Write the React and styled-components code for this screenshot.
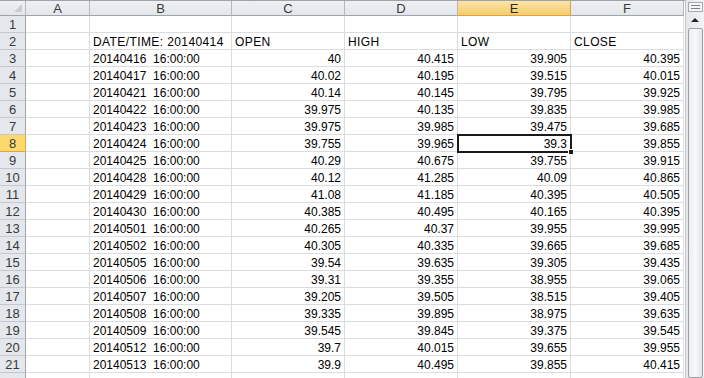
import styled, { createGlobalStyle } from "styled-components";

const GlobalStyle = createGlobalStyle`
  html, body {
    margin: 0;
    padding: 0;
    background: #ffffff;
  }
  * {
    box-sizing: border-box;
  }
`;

const COLS = ["A", "B", "C", "D", "E", "F"];
const WIDTHS = [26, 64, 142, 113, 113, 113, 113];
const SELECTED_COL = "E";
const SELECTED_ROW = 8;

const data = [
  ["20140416", "40", "40.415", "39.905", "40.395"],
  ["20140417", "40.02", "40.195", "39.515", "40.015"],
  ["20140421", "40.14", "40.145", "39.795", "39.925"],
  ["20140422", "39.975", "40.135", "39.835", "39.985"],
  ["20140423", "39.975", "39.985", "39.475", "39.685"],
  ["20140424", "39.755", "39.965", "39.3", "39.855"],
  ["20140425", "40.29", "40.675", "39.755", "39.915"],
  ["20140428", "40.12", "41.285", "40.09", "40.865"],
  ["20140429", "41.08", "41.185", "40.395", "40.505"],
  ["20140430", "40.385", "40.495", "40.165", "40.395"],
  ["20140501", "40.265", "40.37", "39.955", "39.995"],
  ["20140502", "40.305", "40.335", "39.665", "39.685"],
  ["20140505", "39.54", "39.635", "39.305", "39.435"],
  ["20140506", "39.31", "39.355", "38.955", "39.065"],
  ["20140507", "39.205", "39.505", "38.515", "39.405"],
  ["20140508", "39.335", "39.895", "38.975", "39.635"],
  ["20140509", "39.545", "39.845", "39.375", "39.545"],
  ["20140512", "39.7", "40.015", "39.655", "39.955"],
  ["20140513", "39.9", "40.495", "39.855", "40.415"],
];

const Window = styled.div`
  display: flex;
  width: 704px;
  height: 378px;
  overflow: hidden;
  background: #ffffff;
  font-family: "Liberation Sans", Arial, sans-serif;
`;

const SheetArea = styled.div`
  display: flex;
  flex-direction: column;
  width: 685px;
`;

const TopBand = styled.div`
  height: 4px;
  background: #e1e4e8;
  border-bottom: 1px solid #9da3ab;
`;

const Grid = styled.div`
  display: grid;
  grid-template-columns: ${WIDTHS.map((w) => w + "px").join(" ")};
  grid-auto-rows: 17px;
  grid-template-rows: 15px;
`;

const Corner = styled.div`
  position: relative;
  background: linear-gradient(#eef0f3, #e2e5ea);
  border-right: 1px solid #b4b9c0;
  border-bottom: 1px solid #9ea4ac;
  &::after {
    content: "";
    position: absolute;
    right: 3px;
    bottom: 3px;
    border-style: solid;
    border-width: 0 0 8px 8px;
    border-color: transparent transparent #c8ccd2 transparent;
  }
`;

const ColHead = styled.div`
  display: flex;
  align-items: center;
  justify-content: center;
  font-size: 13px;
  color: ${(p) => (p.$active ? "#2b2b2b" : "#3a3a3a")};
  background: ${(p) =>
    p.$active
      ? "linear-gradient(#fbe3a8, #f6cc6b)"
      : "linear-gradient(#eef0f3, #e3e6ea)"};
  border-right: 1px solid ${(p) => (p.$active ? "#e2a23c" : "#b4b9c0")};
  border-bottom: 1px solid ${(p) => (p.$active ? "#e2a23c" : "#9ea4ac")};
  padding-top: 1px;
`;

const RowHead = styled.div`
  display: flex;
  align-items: center;
  justify-content: center;
  font-size: 13px;
  color: #3a3a3a;
  background: ${(p) => (p.$active ? "#fbd96e" : "#e4e7eb")};
  border-right: 1px solid ${(p) => (p.$active ? "#e2a23c" : "#9ea4ac")};
  border-bottom: 1px solid ${(p) => (p.$active ? "#e2a23c" : "#c5c9cf")};
  padding-top: 1px;
`;

const Cell = styled.div`
  position: relative;
  display: flex;
  align-items: center;
  justify-content: ${(p) => (p.$num ? "flex-end" : "flex-start")};
  padding: 2px 3px 0 3px;
  font-size: 12px;
  letter-spacing: ${(p) => (p.$label ? "0.4px" : "0")};
  color: #000;
  white-space: pre;
  border-right: 1px solid #dadcdd;
  border-bottom: 1px solid #dadcdd;
  ${(p) =>
    p.$selected &&
    `
    outline: 2px solid #1a1a1a;
    outline-offset: -1px;
    z-index: 1;
  `}
`;

const FillHandle = styled.span`
  position: absolute;
  right: -4px;
  bottom: -4px;
  width: 6px;
  height: 6px;
  background: #1a1a1a;
  border: 1px solid #ffffff;
`;

const ScrollBar = styled.div`
  display: flex;
  flex-direction: column;
  align-items: center;
  width: 19px;
  background: linear-gradient(90deg, #e6e7e9, #f2f3f4);
  border-left: 1px solid #c3c7cc;
  padding-top: 2px;
`;

const SplitBox = styled.div`
  display: flex;
  flex-direction: column;
  justify-content: center;
  gap: 2px;
  width: 15px;
  height: 10px;
  padding: 0 2px;
  background: #f4f5f6;
  border: 1px solid #a5aab1;
  & > span {
    height: 1px;
    background: #7d838b;
  }
`;

const ArrowBtn = styled.div`
  display: flex;
  align-items: center;
  justify-content: center;
  height: 14px;
  width: 17px;
  margin-top: 1px;
  &::before {
    content: "";
    border-style: solid;
    border-width: 0 4px 4px 4px;
    border-color: transparent transparent #222 transparent;
  }
`;

const Thumb = styled.div`
  flex: 1;
  width: 15px;
  margin-top: 1px;
  border: 1px solid #9ea2a8;
  border-radius: 2px;
  background: linear-gradient(90deg, #eceef0, #f7f8f9 50%, #e2e4e7);
`;

export default function App() {
  const rows = [];
  rows.push({ n: 1, cells: ["", "", "", "", "", ""] });
  rows.push({ n: 2, cells: ["", "DATE/TIME: 20140414", "OPEN", "HIGH", "LOW", "CLOSE"] });
  data.forEach((d, i) => {
    rows.push({ n: i + 3, cells: ["", d[0] + "  16:00:00", d[1], d[2], d[3], d[4]] });
  });
  rows.push({ n: 22, cells: ["", "", "", "", "", ""], hidden: true });

  return (
    <Window>
      <GlobalStyle />
      <SheetArea>
        <TopBand />
        <Grid>
          <Corner />
          {COLS.map((c) => (
            <ColHead key={c} $active={c === SELECTED_COL}>
              {c}
            </ColHead>
          ))}
          {rows.map((r) => [
            <RowHead key={"h" + r.n} $active={r.n === SELECTED_ROW}>
              {r.hidden ? "" : r.n}
            </RowHead>,
            ...r.cells.map((v, ci) => {
              const selected = r.n === SELECTED_ROW && COLS[ci] === SELECTED_COL;
              return (
                <Cell
                  key={r.n + "-" + ci}
                  $num={r.n > 2 && ci > 1}
                  $label={r.n === 2}
                  $selected={selected}
                >
                  {v}
                  {selected && <FillHandle />}
                </Cell>
              );
            }),
          ])}
        </Grid>
      </SheetArea>
      <ScrollBar>
        <SplitBox>
          <span />
          <span />
        </SplitBox>
        <ArrowBtn />
        <Thumb />
      </ScrollBar>
    </Window>
  );
}
